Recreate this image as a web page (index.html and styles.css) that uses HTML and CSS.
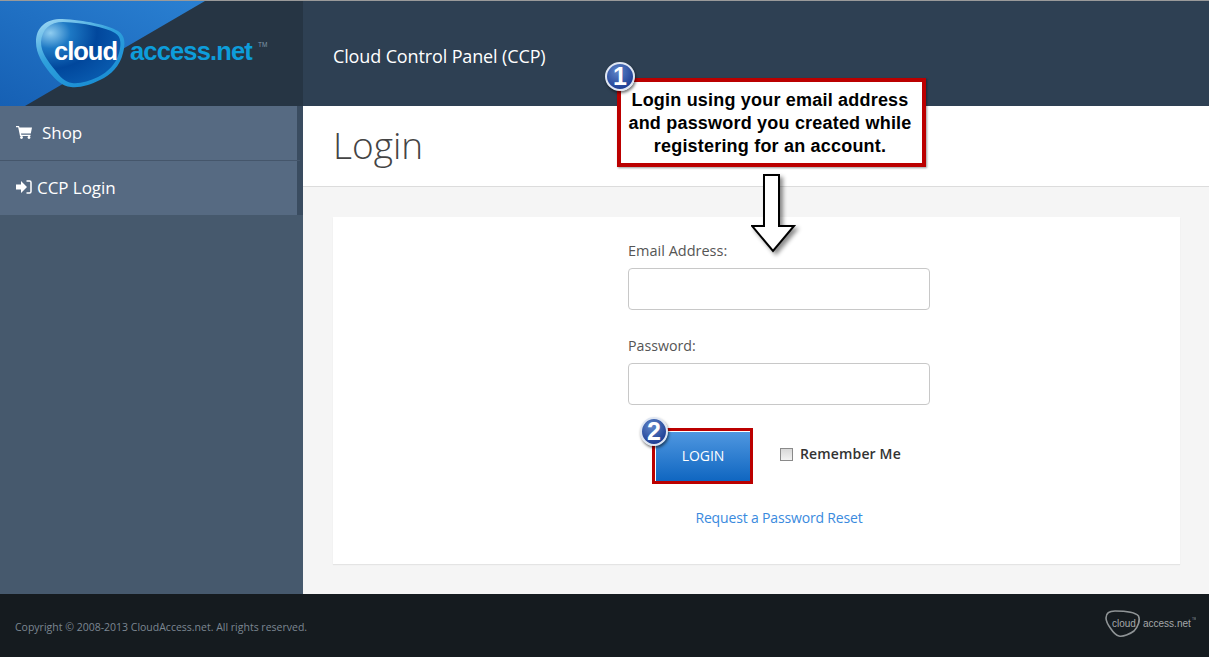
FILE: index.html
```html
<!DOCTYPE html>
<html lang="en">
<head>
<meta charset="utf-8">
<title>Cloud Control Panel - Login</title>
<link rel="stylesheet" href="styles.css">
</head>
<body>
<div class="page">
  <header class="header">
    <div class="logo-area">
      <svg class="logo" width="303" height="105" viewBox="0 0 303 105">
        <defs>
          <linearGradient id="tri" x1="0" y1="1" x2="1" y2="0">
            <stop offset="0" stop-color="#1660b4"/>
            <stop offset="1" stop-color="#2a80d2"/>
          </linearGradient>
          <linearGradient id="rim" x1="0" y1="0" x2="0.6" y2="1">
            <stop offset="0" stop-color="#a8dcf5"/>
            <stop offset="0.5" stop-color="#2fa0dc"/>
            <stop offset="1" stop-color="#1a8ed4"/>
          </linearGradient>
          <radialGradient id="blob" cx="0.12" cy="0.18" r="0.9">
            <stop offset="0" stop-color="#8fcdf0"/>
            <stop offset="0.28" stop-color="#1d78c4"/>
            <stop offset="0.65" stop-color="#01479c"/>
            <stop offset="1" stop-color="#0858ac"/>
          </radialGradient>
        </defs>
        <polygon points="0,0 205,0 25,105 0,105" fill="url(#tri)"/>
        <path d="M36 41C36 26 46 18 62 18C84 19 108 24 118 30C126 35 125 44 123 52C120 65 111 74 100 79C90 84 80 87 71 86C62 85 56 79 50 72C43 63 36 53 36 41Z" fill="url(#rim)"/>
        <path d="M41 41C42 28 50 21 63 21C84 22 105 26 115 32C122 36 121 45 119 52C116 63 108 71 98 76C89 80 80 83 72 82C65 81 60 76 55 69C48 60 41 52 41 41Z" fill="url(#blob)"/>
        <text class="logo-cloud" x="54" y="59">cloud</text>
        <text class="logo-access" x="130" y="59">access.net</text>
        <text class="logo-tm" x="258" y="46">TM</text>
      </svg>
    </div>
    <div class="header-title">Cloud Control Panel (CCP)</div>
  </header>
  <div class="layout">
    <nav class="sidebar">
      <ul class="menu">
        <li class="menu-item">
          <svg class="icon" width="16" height="14" viewBox="0 0 16 14"><path d="M0 1h3l.5 1.5H16l-1.2 6H5l.3 1.2H14.500v1.300H4L2.200 2.300H0Z" fill="#fff"/><circle cx="5.500" cy="12.500" r="1.400" fill="#fff"/><circle cx="13" cy="12.500" r="1.400" fill="#fff"/></svg>
          <span class="menu-shop">Shop</span>
        </li>
        <li class="menu-item">
          <svg class="icon" width="16" height="14" viewBox="0 0 16 14"><path d="M0 4.500h5V1l6 6-6 6V9.500H0Z" fill="#fff"/><path d="M10.500 1H13.500Q15 1 15 2.500V11.500Q15 13 13.500 13H10.500" fill="none" stroke="#fff" stroke-width="1.500"/></svg>
          <span>CCP Login</span>
        </li>
      </ul>
    </nav>
    <main class="content">
      <div class="title-bar"><h1 class="title">Login</h1></div>
      <div class="content-body">
        <form class="card">
          <div class="form-col">
            <label class="field-label">Email Address:</label>
            <div class="input"></div>
            <label class="field-label second">Password:</label>
            <div class="input"></div>
            <div class="actions">
              <div class="login-btn">LOGIN</div>
              <div class="remember"><span class="checkbox"></span><span>Remember Me</span></div>
            </div>
            <a class="reset" href="#">Request a Password Reset</a>
          </div>
        </form>
      </div>
    </main>
  </div>
  <footer class="footer">
    <span class="copyright">Copyright © 2008-2013 CloudAccess.net. All rights reserved.</span>
    <svg class="footer-logo" width="92" height="30" viewBox="0 0 92 30">
      <path d="M2 10C2 5 5 3 11 3C19 3 31 4 34.500 8C36.500 12 34 19 30 23C26 26 19 29 15 28C11 27 9 24 7 21C4 17 2 14 2 10Z" fill="none" stroke="#8f9496" stroke-width="1.600"/>
      <text class="fl-text" x="8" y="19">cloud</text>
      <text class="fl-text" x="39" y="19">access.net</text>
      <text class="fl-tm" x="88" y="12">TM</text>
    </svg>
  </footer>

  <div class="callout">Login using your email address<br>and password you created while<br>registering for an account.</div>
  <div class="badge badge-one">1</div>
  <svg class="arrow" width="52" height="86" viewBox="0 0 52 86">
    <path d="M13 2H28V53H43L22 78L1 53H13Z" fill="#fff" stroke="#000" stroke-width="2"/>
  </svg>
  <div class="btn-frame"></div>
  <div class="badge badge-two">2</div>
</div>
</body>
</html>
```
FILE: styles.css
```css
* { box-sizing: border-box; }
html, body { margin: 0; padding: 0; }
body { font-family: "Open Sans", "Liberation Sans", sans-serif; color: #444; overflow: hidden; }
.page { position: relative; width: 1209px; height: 657px; border-top: 1px solid #9a9a9a; display: flex; flex-direction: column; }

.header { height: 105px; display: flex; background: #2e4053; flex: none; }
.logo-area { width: 303px; background: #263544; flex: none; }
.logo { display: block; }
.logo-cloud { font: bold 25.500px "Liberation Sans", sans-serif; fill: #fff; letter-spacing: -1px; }
.logo-access { font: bold 25.500px "Liberation Sans", sans-serif; fill: #0d9ddb; letter-spacing: -0.85px; }
.logo-tm { font: 6.500px "Liberation Sans", sans-serif; fill: #7f97a8; }
.header-title { color: #fff; font-size: 18px; letter-spacing: -0.13px; padding: 43px 0 0 30px; line-height: 25px; }

.layout { flex: 1; display: flex; min-height: 0; }
.sidebar { width: 303px; flex: none; background: #46596d; }
.menu { list-style: none; margin: 0; padding: 0; width: 303px; background: #3a4c60; }
.menu-item { width: 297px; height: 54px; background: #566a82; color: #fff; font-size: 17px; letter-spacing: -0.06px; display: flex; align-items: center; padding: 0 0 2px 16px; margin-bottom: 1px; position: relative; }
.menu-item:last-child { margin-bottom: 0; }
.menu-item:first-child::after { content: ""; position: absolute; left: 0; top: 54px; width: 300px; height: 1px; background: #45566b; }
.icon { margin-right: 5px; flex: none; }
.menu-shop { margin-left: 5px; }

.content { flex: 1; display: flex; flex-direction: column; background: #f5f5f5; min-width: 0; }
.title-bar { height: 81px; background: #fff; border-bottom: 1px solid #dcdcdc; padding-left: 30px; flex: none; }
.title { margin: 0; font-weight: 300; font-size: 37px; line-height: 78px; color: #444; }
.content-body { flex: 1; padding: 30px 29px 30px 30px; }
.card { background: #fff; height: 347px; box-shadow: 0 1px 1px #e4e4e4; padding: 22px 0 0 295px; }
.form-col { width: 302px; display: flex; flex-direction: column; }
.field-label { font-size: 14.500px; line-height: 22px; height: 29px; padding-top: 1px; color: #555; }
.second { margin-top: 24px; font-size: 14.200px; }
.input { height: 42px; border: 1px solid #c8c8c8; border-radius: 4px; background: #fff; }
.actions { display: flex; align-items: center; margin-top: 27px; padding-left: 28px; }
.login-btn { width: 94px; height: 50px; background: linear-gradient(#4f97e0, #0e65c0); color: #fff; font-size: 14px; letter-spacing: -0.1px; display: flex; align-items: center; justify-content: center; padding-bottom: 4px; }
.remember { display: flex; align-items: center; margin-left: 30px; padding-bottom: 8px; font-size: 14px; font-weight: 600; color: #333; letter-spacing: 0.15px; }
.checkbox { width: 13px; height: 13px; margin-top: 2px; border: 1px solid #8a8a8a; background: linear-gradient(#d8d8d8, #f2f2f2); margin-right: 7px; }
.reset { align-self: center; margin-top: 26px; font-size: 14px; letter-spacing: -0.16px; line-height: 20px; color: #3a8ade; text-decoration: none; }

.footer { height: 63px; flex: none; background: #151b1f; display: flex; align-items: center; justify-content: space-between; padding: 0 13px 0 15px; }
.copyright { font-size: 10.500px; color: #7c8792; margin-top: 2px; }
.fl-text { font: 10px "Liberation Sans", sans-serif; fill: #a4a8aa; }
.fl-tm { font: 3px "Liberation Sans", sans-serif; fill: #8f9496; }
.footer-logo { margin-bottom: 5px; }

.callout { position: absolute; left: 617px; top: 77px; width: 309px; height: 89px; border: 4px solid #bb0000; background: #fff; color: #000; font: bold 18px/23px "Liberation Sans", Arial, sans-serif; letter-spacing: 0.2px; text-align: center; white-space: nowrap; display: flex; align-items: center; justify-content: center; padding: 2px 3px 0 0; box-shadow: 1px 1px 2px rgba(0,0,0,.4); }
.badge { position: absolute; height: 29px; border-radius: 50%; border: 2px solid #dfe6f2; background: radial-gradient(circle at 40% 30%, #5f86c8, #1f3f95 75%); color: #fff; font: bold 25px/25px "Liberation Sans", sans-serif; text-align: center; box-shadow: 1px 2px 3px rgba(0,0,0,.55); }
.badge-one { left: 605px; top: 61px; width: 30px; }
.badge-two { left: 640px; top: 416px; width: 28px; }
.arrow { position: absolute; left: 751px; top: 172px; filter: drop-shadow(3px 3px 2px rgba(0,0,0,.45)); }
.btn-frame { position: absolute; left: 652px; top: 427px; width: 101px; height: 56px; border: 3px solid #bb0000; }
```
